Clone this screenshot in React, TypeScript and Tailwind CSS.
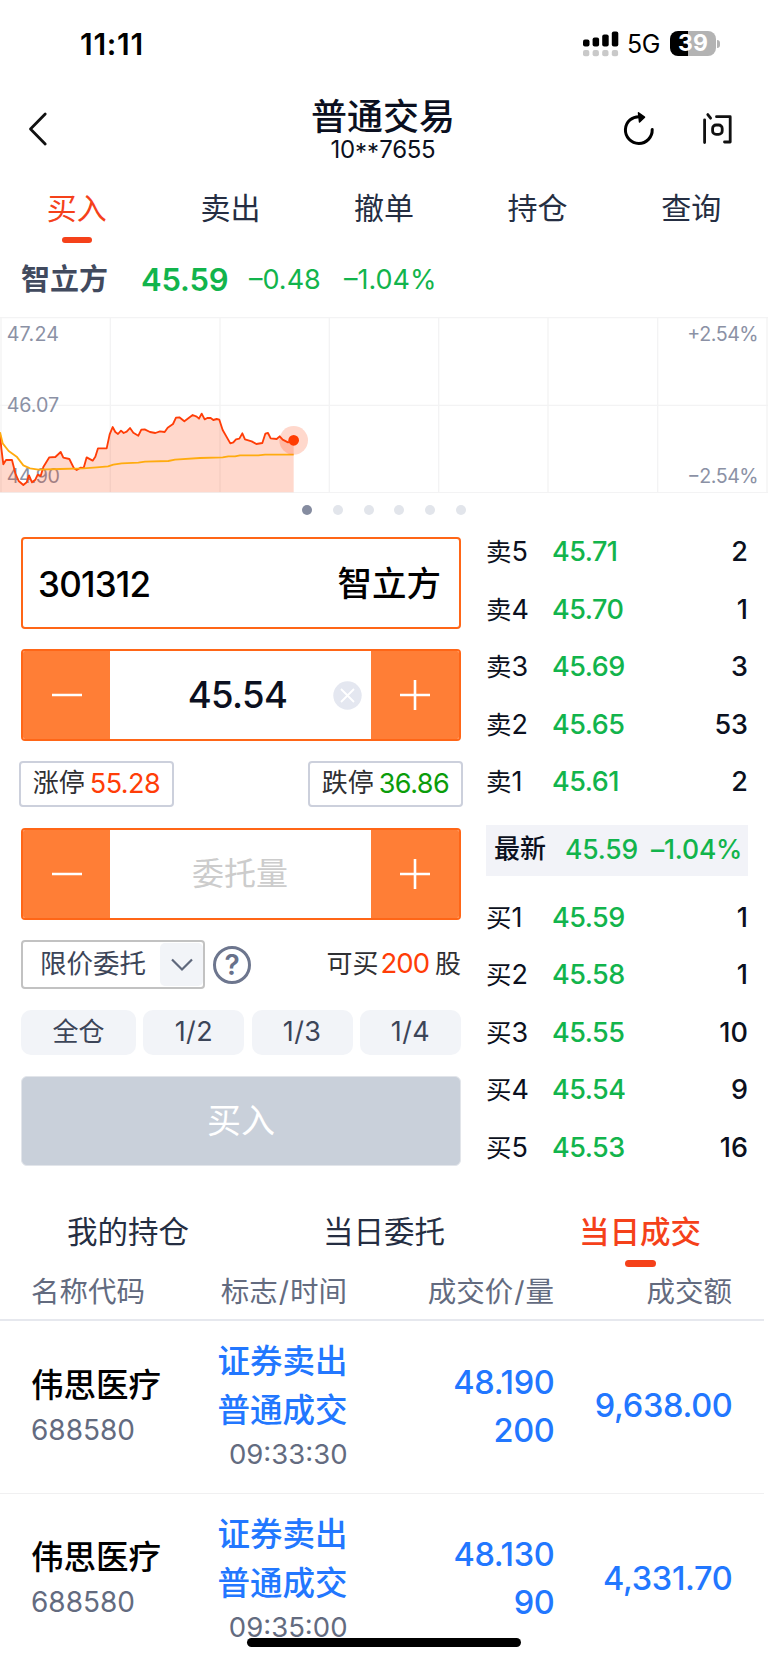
import type { ReactNode } from 'react';

const ASKS = [
  ['卖5', '45.71', '2'],
  ['卖4', '45.70', '1'],
  ['卖3', '45.69', '3'],
  ['卖2', '45.65', '53'],
  ['卖1', '45.61', '2'],
];
const BIDS = [
  ['买1', '45.59', '1'],
  ['买2', '45.58', '1'],
  ['买3', '45.55', '10'],
  ['买4', '45.54', '9'],
  ['买5', '45.53', '16'],
];
const TRADES = [
  { name: '伟思医疗', code: '688580', side: '证券卖出', kind: '普通成交', time: '09:33:30', price: '48.190', qty: '200', amount: '9,638.00' },
  { name: '伟思医疗', code: '688580', side: '证券卖出', kind: '普通成交', time: '09:35:00', price: '48.130', qty: '90', amount: '4,331.70' },
];

const PRICE =
  '0,385 4,430 10,478 18,465 36,465 46,505 56,528 70,540 80,532 87,511 96,532 106,524 113,509 122,513 130,486 148,457 166,456 182,441 190,458 208,462 222,490 230,495 241,488 251,489 260,457 278,467 286,455 294,430 320,430 329,388 338,366 346,381 354,387 363,377 371,384 380,380 390,369 400,383 415,392 424,374 434,373 450,381 466,384 480,379 494,381 503,368 519,357 528,338 538,337 553,349 565,340 578,330 590,335 597,341 605,326 614,343 622,339 632,339 640,345 650,342 658,344 668,375 691,415 700,412 708,403 718,401 727,385 735,403 755,409 769,417 787,414 796,386 804,384 812,400 830,402 839,394 848,404 864,412 881,407';
const AVERAGE =
  '0,382 8,415 26,438 50,455 70,481 90,490 115,494 180,492 250,490 290,487 324,484 340,479 365,475 415,473 435,470 505,468 525,464 600,459 668,457 685,454 705,454 720,451 775,451 795,449 881,449';

function Chart() {
  return (
    <svg className="block h-44 w-full" viewBox="0 36 2304 528">
      <g stroke="#f3f3f4" strokeWidth="4">
        <path d="M0 38H2304M0 301H2304M0 563H2304" />
        <path d="M3 36V564M331 36V564M660 36V564M988 36V564M1316 36V564M1644 36V564M1973 36V564M2301 36V564" />
      </g>
      <g className="font-['Inter','Noto_Sans_CJK_SC',sans-serif]" fill="#8b91a5" fontSize="59">
        <text x="20" y="107" textLength="157">47.24</text>
        <text x="20" y="320" textLength="157">46.07</text>
        <text x="20" y="533" textLength="160">44.90</text>
        <text x="2062" y="107" textLength="214">+2.54%</text>
        <text x="2062" y="533" textLength="214">−2.54%</text>
      </g>
      <polygon points={`${PRICE} 881,562 0,562`} fill="#ff3b00" fillOpacity="0.2" />
      <polyline points={PRICE} fill="none" stroke="#ff3d07" strokeWidth="5.500" strokeLinejoin="round" />
      <polyline points={AVERAGE} fill="none" stroke="#ffab0f" strokeWidth="5.500" strokeLinejoin="round" />
      <circle cx="881" cy="406" r="43" fill="#ff3b00" fillOpacity="0.2" />
      <circle cx="881" cy="406" r="16" fill="#ff3b00" />
    </svg>
  );
}

function StatusBar() {
  return (
    <div className="flex h-[87px] items-center pl-20 pr-12">
      <span className="text-[30px] font-semibold leading-none tracking-[0.7px] text-black">11:11</span>
      <svg className="ml-auto" width="36" height="26" viewBox="0 0 36 26">
        <g fill="#000">
          <rect x="0" y="8.500" width="6.500" height="7" rx="2" />
          <rect x="9.600" y="6.500" width="6.500" height="9" rx="2" />
          <rect x="19.200" y="3.500" width="6.500" height="12" rx="2" />
          <rect x="28.800" y="0.500" width="6.500" height="15" rx="2" />
        </g>
        <g fill="#c9c9c9">
          <rect x="0" y="19" width="6.300" height="6.300" rx="2" />
          <rect x="9.600" y="19" width="6.300" height="6.300" rx="2" />
          <rect x="19.200" y="19" width="6.300" height="6.300" rx="2" />
          <rect x="28.800" y="19" width="6.300" height="6.300" rx="2" />
        </g>
      </svg>
      <span className="ml-2 mt-[2px] w-9 text-[25px] leading-none tracking-[-0.4px] text-black">5G</span>
      <div className="ml-[7px] flex h-[25px] w-[46px] items-center justify-center rounded-[8px] bg-[linear-gradient(90deg,#000_39%,#b3b3b3_39%)] text-[23px] font-bold leading-none text-white">39</div>
      <div className="ml-[1px] h-2 w-[3px] rounded-r-full bg-[#b3b3b3]" />
    </div>
  );
}

function Header() {
  return (
    <header className="flex h-[82px] items-start">
      <svg className="ml-7 mt-[25px]" width="20" height="34" viewBox="0 0 20 34" fill="none" stroke="#111" strokeWidth="2.800" strokeLinecap="round" strokeLinejoin="round">
        <path d="M17.200 2L2.500 17L17.200 32" />
      </svg>
      <div className="ml-[162px] w-[346px] text-center text-[#0b1020]">
        <h1 className="mt-[11px] text-[36px] font-medium leading-[38px]">普通交易</h1>
        <p className="text-[24px] leading-[27px] tracking-[-0.3px]">
          10<span className="relative top-[3px] tracking-[0.2px]">**</span>7655
        </p>
      </div>
      <svg className="ml-[67px] mt-[25px]" width="32" height="34" viewBox="0 0 32 34" fill="none" stroke="#000" strokeWidth="3">
        <path d="M29.200 17.500A13.400 13.400 0 1 1 17 4.700" strokeLinecap="round" />
        <path d="M15.500 0.800L21.500 5.200L16.500 10Z" fill="#000" strokeWidth="1.500" strokeLinejoin="round" />
      </svg>
      <svg className="ml-[47px] mt-[25px]" width="32" height="34" viewBox="0 0 32 34" fill="none" stroke="#111" strokeWidth="2.800" strokeLinecap="round" strokeLinejoin="round">
        <path d="M2.600 7.800V30.500M5.800 2.600L8.600 6.200M14.500 4.700H28.200V30H22.500" />
        <rect x="10.600" y="13" width="9.600" height="9.400" rx="3.500" />
      </svg>
    </header>
  );
}

function Stepper({ children }: { children: ReactNode }) {
  return (
    <div className="flex h-[92px] w-[440px] overflow-hidden rounded-[4px] border-2 border-[#ff6617] bg-white">
      <div className="flex w-[87px] items-center justify-center bg-[#ff7e36]">
        <svg width="30" height="30" viewBox="0 0 30 30" stroke="#fff" strokeWidth="2.600"><path d="M0 15H30" /></svg>
      </div>
      <div className="relative flex flex-1 items-center justify-center">{children}</div>
      <div className="flex w-[88px] items-center justify-center bg-[#ff7e36]">
        <svg width="30" height="30" viewBox="0 0 30 30" stroke="#fff" strokeWidth="2.600"><path d="M0 15H30M15 0V30" /></svg>
      </div>
    </div>
  );
}

function OrderForm() {
  return (
    <div className="w-[440px]">
      <div className="flex h-[92px] items-center justify-between rounded-[4px] border-2 border-[#ff6617] pl-[15px] pr-[18px] pt-[2px] text-black">
        <span className="text-[35px] font-medium leading-none tracking-[-0.8px]">301312</span>
        <span className="text-[34.500px] font-medium leading-none">智立方</span>
      </div>
      <div className="mt-5">
        <Stepper>
          <span className="mr-[6px] text-[36.500px] font-medium leading-none tracking-[-0.6px] text-[#0b1020]">45.54</span>
          <svg className="absolute right-[9px]" width="29" height="29" viewBox="0 0 29 29">
            <circle cx="14.500" cy="14.500" r="14.200" fill="#e4e7f0" />
            <path d="M8 8L21 21M21 8L8 21" stroke="#fff" strokeWidth="1.800" />
          </svg>
        </Stepper>
      </div>
      <div className="-mx-[2px] mt-5 flex justify-between text-[26px] leading-none text-[#2f3033]">
        <div className="flex h-[46px] w-[155px] items-center justify-center rounded-[4px] border-2 border-[#ccd0dc] pb-[2px]">
          <span>涨停</span><span className="ml-[5px] text-[27px] tracking-[-0.5px] text-[#ff3d07]">55.28</span>
        </div>
        <div className="flex h-[46px] w-[155px] items-center justify-center rounded-[4px] border-2 border-[#ccd0dc] pb-[2px]">
          <span>跌停</span><span className="ml-[5px] text-[27px] tracking-[-0.5px] text-[#0a9c0a]">36.86</span>
        </div>
      </div>
      <div className="mt-[21px]">
        <Stepper><span className="mr-[1px] text-[32px] leading-none text-[#ccc]">委托量</span></Stepper>
      </div>
      <div className="mt-5 flex h-[49px] items-center">
        <div className="flex h-[49px] w-[184px] items-center rounded-[4px] border-2 border-[#c2c2c2] pl-[17px]">
          <span className="-mt-[3px] whitespace-nowrap text-[26.500px] leading-none text-[#3c4558]">限价委托</span>
          <div className="ml-auto flex h-[43px] w-[43px] items-center justify-center rounded-[5px] bg-[#f2f4f8]">
            <svg width="22" height="14" viewBox="0 0 22 14" fill="none" stroke="#5f687c" strokeWidth="2.200"><path d="M1 1.500L11 11.500L21 1.500" /></svg>
          </div>
        </div>
        <div className="ml-2 flex h-[38px] w-[38px] items-center justify-center rounded-full border-[3px] border-[#6d768e] text-[28px] font-semibold leading-none text-[#68718a]">?</div>
        <div className="-mt-[2px] ml-auto flex items-center text-[26px] leading-none text-[#2f3033]">
          <span>可买</span><span className="ml-[2px] text-[27.500px] tracking-[-1px] text-[#ff3d07]">200</span><span className="ml-[6px]">股</span>
        </div>
      </div>
      <div className="mt-[21px] flex justify-between text-[26px] leading-none text-[#3c4558]">
        <div className="flex h-[45px] w-[115px] items-center justify-center rounded-[10px] bg-[#f2f4f8] pb-[2px]">全仓</div>
        <div className="flex h-[45px] w-[101px] items-center justify-center rounded-[10px] bg-[#f2f4f8] pb-[2px] text-[27px] tracking-[0.4px]">1/2</div>
        <div className="flex h-[45px] w-[101px] items-center justify-center rounded-[10px] bg-[#f2f4f8] pb-[2px] text-[27px] tracking-[0.4px]">1/3</div>
        <div className="flex h-[45px] w-[101px] items-center justify-center rounded-[10px] bg-[#f2f4f8] pb-[2px] text-[27px] tracking-[0.4px]">1/4</div>
      </div>
      <div className="mt-[21px] flex h-[90px] items-center justify-center rounded-[6px] border border-[#e2e5ea] bg-[#c9d0da] text-[34px] leading-none text-white">买入</div>
    </div>
  );
}

function BookRows({ rows }: { rows: string[][] }) {
  return (
    <>
      {rows.map(([label, price, qty]) => (
        <div key={label} className="flex h-[57.500px] items-center text-[27px] leading-none text-[#0b1020]">
          <span className="w-[66px] text-[27px]"><span className="text-[25.500px]">{label[0]}</span>{label[1]}</span>
          <span className="font-medium tracking-[-0.5px] text-[#12b44c]">{price}</span>
          <span className="ml-auto font-medium">{qty}</span>
        </div>
      ))}
    </>
  );
}

export default function App() {
  return (
    <div className="relative h-[1662px] w-[768px] overflow-hidden bg-white font-['Inter','Noto_Sans_CJK_SC',sans-serif]">
      <StatusBar />
      <Header />
      <nav className="grid h-[80px] grid-cols-5 text-center text-[30px] leading-[79px] text-[#252e42]">
        <div className="flex flex-col items-center text-[#f5411a]">
          <span>买入</span>
          <i className="-mt-[11px] h-[6px] w-[30px] shrink-0 rounded-full bg-[#f5411a]" />
        </div>
        <span>卖出</span>
        <span>撤单</span>
        <span>持仓</span>
        <span>查询</span>
      </nav>
      <div className="flex h-[68px] items-center pb-[8px] pl-[21px] leading-none text-[#12b44c]">
        <span className="w-[120px] text-[29px] font-bold text-[#414a5e]">智立方</span>
        <span className="w-[108px] text-[31px] font-semibold tracking-[-0.2px]">45.59</span>
        <span className="w-[95px] text-[27px]">–0.48</span>
        <span className="text-[27px]">–1.04%</span>
      </div>
      <Chart />
      <div className="flex h-[34px] items-center justify-center gap-[20.800px]">
        <i className="h-[10px] w-[10px] rounded-full bg-[#858ca0]" />
        <i className="h-[10px] w-[10px] rounded-full bg-[#e2e5eb]" />
        <i className="h-[10px] w-[10px] rounded-full bg-[#e2e5eb]" />
        <i className="h-[10px] w-[10px] rounded-full bg-[#e2e5eb]" />
        <i className="h-[10px] w-[10px] rounded-full bg-[#e2e5eb]" />
        <i className="h-[10px] w-[10px] rounded-full bg-[#e2e5eb]" />
      </div>
      <div className="flex h-[672px] pl-[21px] pr-[20px] pt-[10px]">
        <OrderForm />
        <div className="-mt-[14px] ml-[25px] flex-1">
          <BookRows rows={ASKS} />
          <div className="mb-[13px] mt-[14px] flex h-[51px] items-center whitespace-nowrap bg-[#f2f3f8] pb-[2px] pl-2 text-[26.500px] font-medium leading-none tracking-[-0.2px] text-[#12b44c]">
            <span className="w-[71px] text-[26px] tracking-normal text-[#0b1020]">最新</span>
            <span className="w-[86px]">45.59</span>
            <span>–1.04%</span>
          </div>
          <BookRows rows={BIDS} />
        </div>
      </div>
      <nav className="grid h-[68px] grid-cols-3 text-center text-[30.500px] leading-[66px] text-[#252e42]">
        <span>我的持仓</span>
        <span>当日委托</span>
        <div className="flex flex-col items-center font-medium text-[#f5411a]">
          <span>当日成交</span>
          <i className="-mt-[5px] h-[7px] w-[31px] shrink-0 rounded-full bg-[#f5411a]" />
        </div>
      </nav>
      <div className="mr-1 grid h-[54px] grid-cols-[347px_207px_178px] items-center border-b-2 border-[#e6e8ee] pb-[2px] text-right text-[28.500px] leading-none text-[#636b7f]">
        <div className="flex justify-between pl-[31px]"><span>名称代码</span><span>标志<span className="mx-[1px]">/</span>时间</span></div>
        <span>成交价<span className="mx-[1px]">/</span>量</span>
        <span>成交额</span>
      </div>
      {TRADES.map((t) => (
        <div key={t.time} className="mr-1 grid h-[172.500px] grid-cols-[180px_167.500px_207px_178px] items-center border-b-[1.500px] border-[#f0f0f1] text-right text-[32.500px] font-medium text-[#2277ff]">
          <div className="-mt-[2px] pl-[31px] text-left">
            <div className="whitespace-nowrap leading-[48px] text-black">伟思医疗</div>
            <div className="text-[28px] font-normal leading-[40px] text-[#636b7f]">{t.code}</div>
          </div>
          <div className="-mt-[2px]">
            <div className="leading-[49px]">{t.side}</div>
            <div className="leading-[49px]">{t.kind}</div>
            <div className="text-[27.500px] font-normal leading-[39px] text-[#636b7f]">{t.time}</div>
          </div>
          <div className="leading-[48px] tracking-[-0.3px]">
            <div>{t.price}</div>
            <div>{t.qty}</div>
          </div>
          <div className="tracking-[-0.3px]">{t.amount}</div>
        </div>
      ))}
      <div className="absolute left-[247px] top-[1638px] h-[9px] w-[274px] rounded-full bg-black" />
    </div>
  );
}
